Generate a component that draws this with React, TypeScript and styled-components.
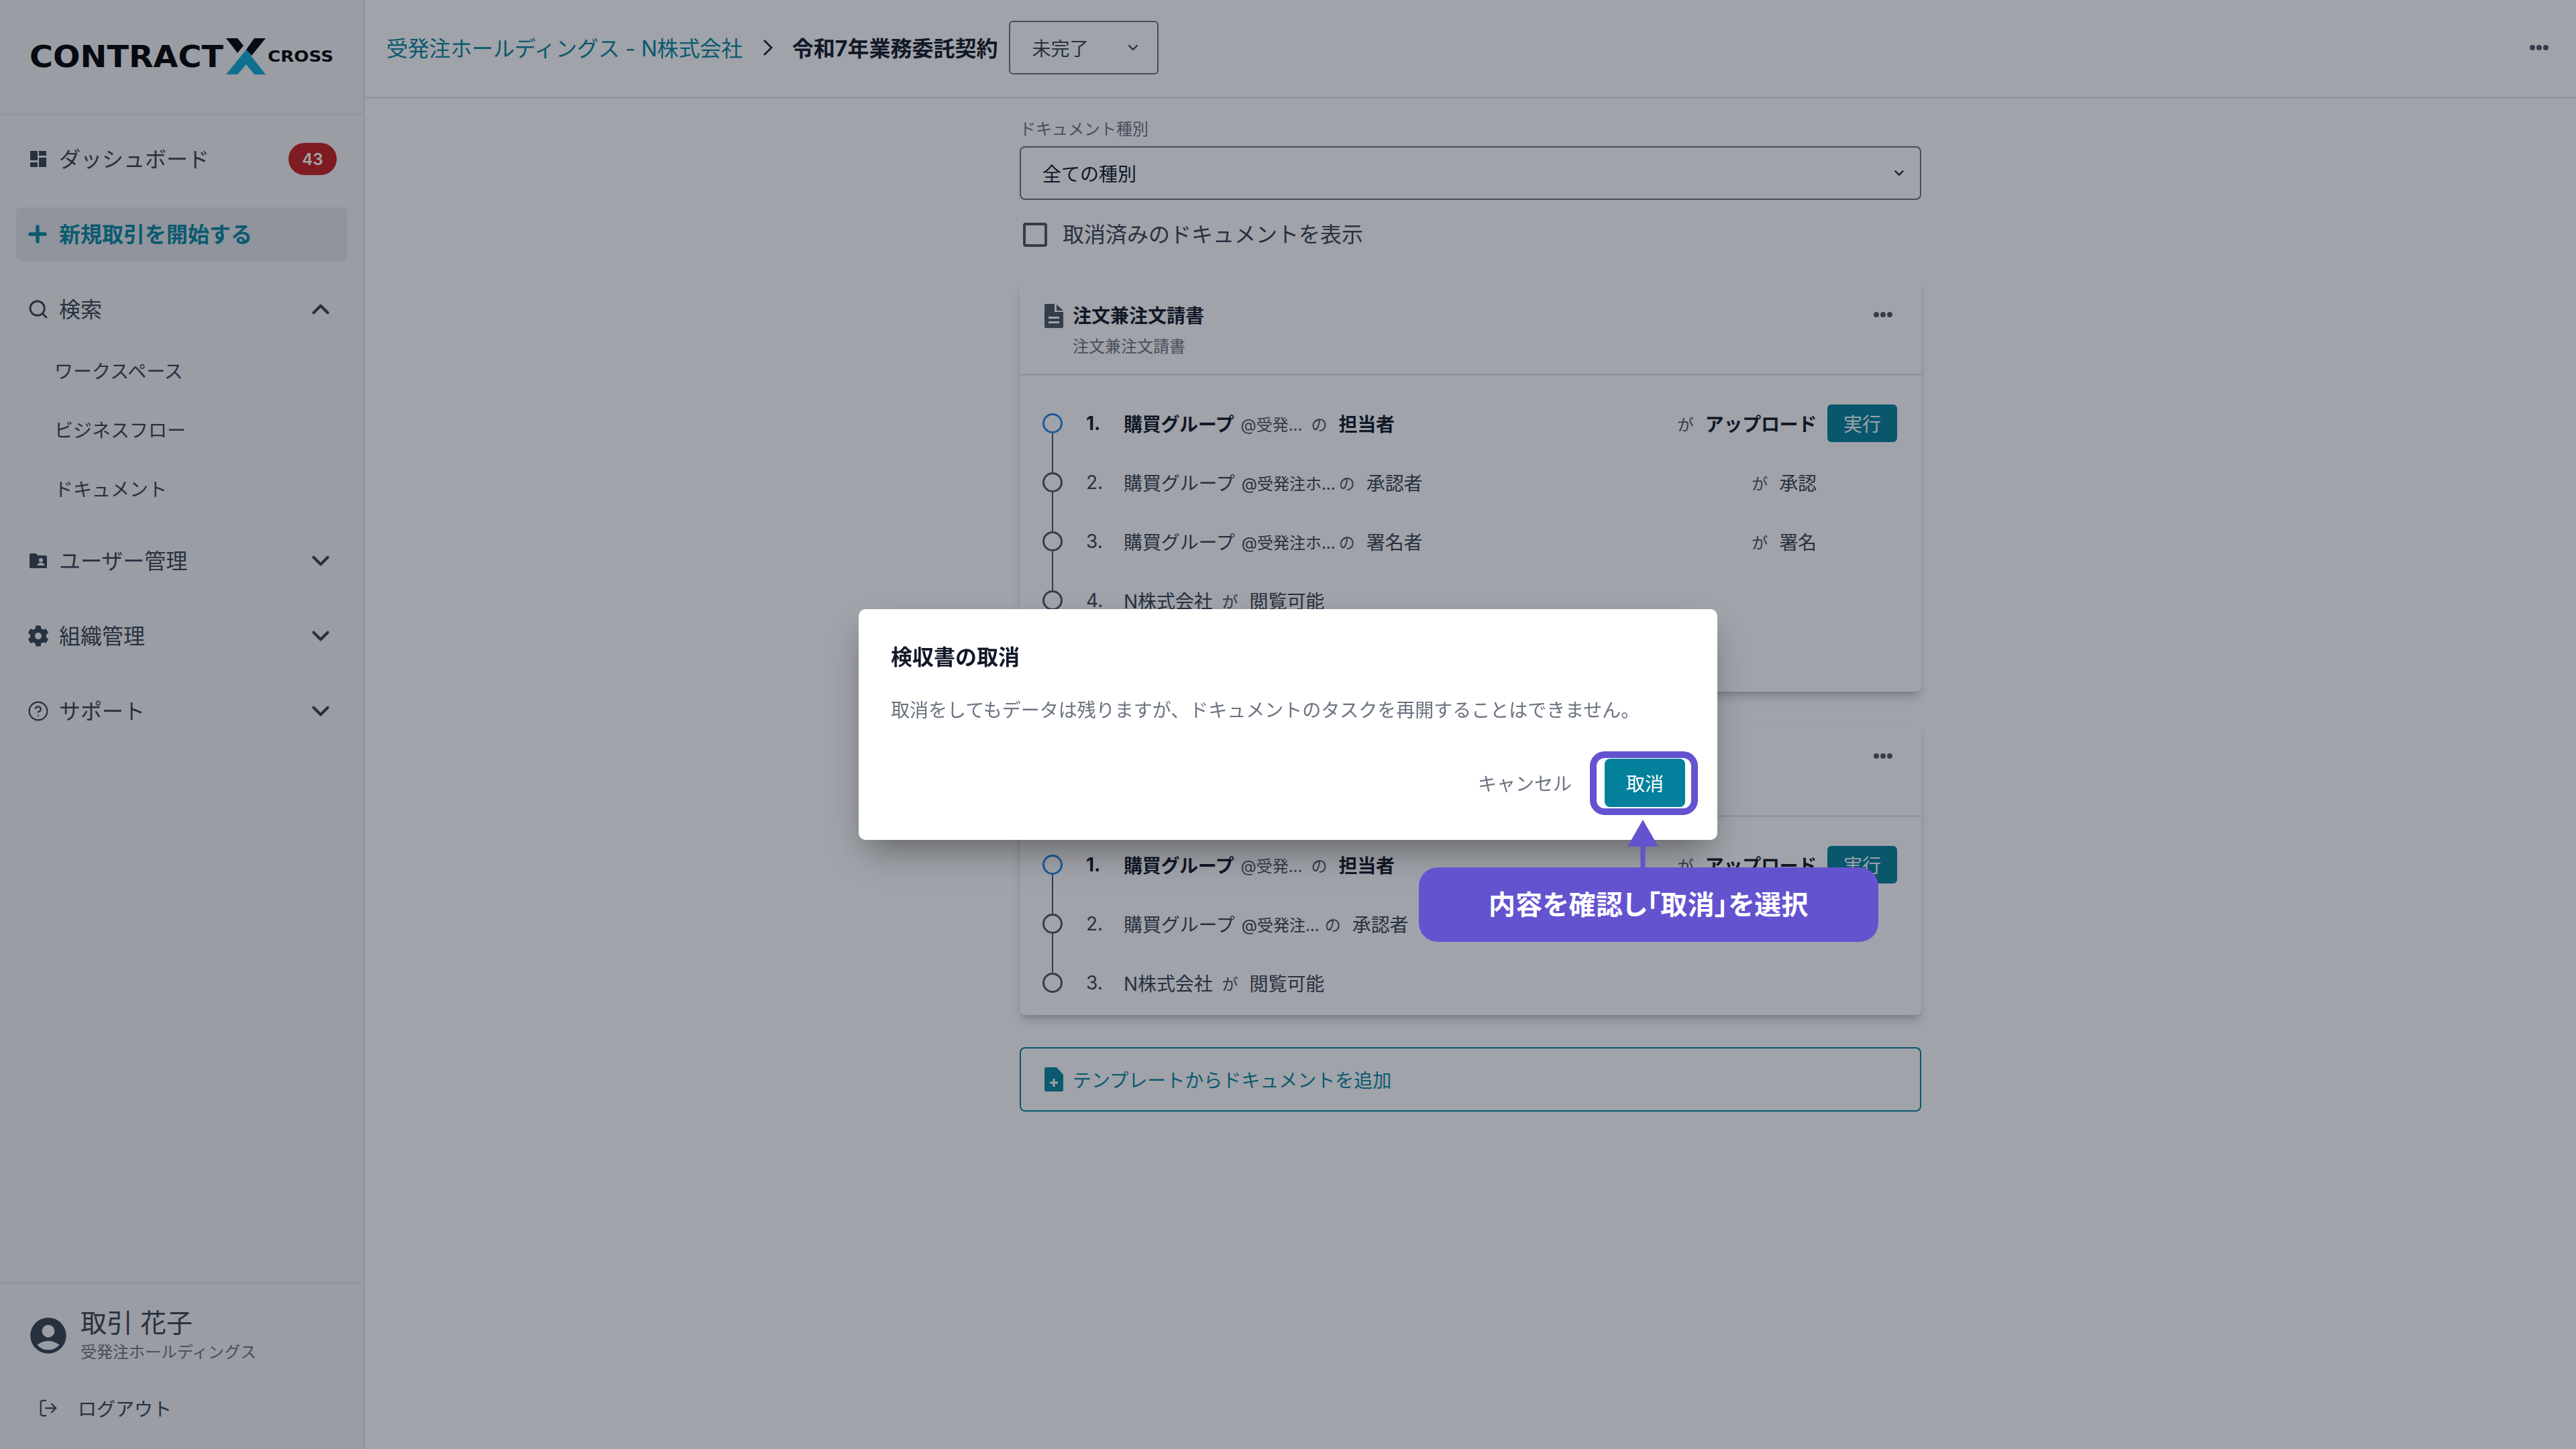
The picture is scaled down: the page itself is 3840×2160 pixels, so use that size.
import * as React from 'react'
import styled, { createGlobalStyle } from 'styled-components'
import { ChevronDown, ChevronUp, CircleHelp, LogOut, Plus, Search } from 'lucide-react'
import { FaCog } from 'react-icons/fa'
import { MdAccountCircle } from 'react-icons/md'

const teal = '#02809c'
const ink = '#111827'
const body = '#374151'
const muted = '#6b7280'
const violet = '#6453cf'

const GlobalStyle = createGlobalStyle`
    html, body {
        margin: 0;
        padding: 0;
        background: #fff;
    }

    body {
        font-family: 'Inter', 'Noto Sans CJK JP', sans-serif;
        color: ${ink};
    }

    * {
        box-sizing: border-box;
    }
`

const Logo = () => (
    <LogoSvg viewBox="0 0 460 60" width="460" height="60">
        <text x="0" y="46" fontFamily="DejaVu Sans" fontWeight="700" fontSize="44" textLength="289" lengthAdjust="spacingAndGlyphs" fill="#000">CONTRACT</text>
        <polygon points="293,3 310,3 319,14 310,25" fill="#000" />
        <polygon points="335,3 352,3 331,29 323,20" fill="#000" />
        <polygon points="323,20 352,57 335,57 323,42 310,57 293,57" fill="#0daad5" />
        <text x="355" y="38" fontFamily="DejaVu Sans" fontWeight="700" fontSize="23" textLength="98" lengthAdjust="spacingAndGlyphs" fill="#000">CROSS</text>
    </LogoSvg>
)

const DashboardIcon = () => (
    <svg viewBox="0 0 24 24" width="24" height="24" fill="currentColor">
        <path d="M0 14h11V0H0zM0 24h11v-7H0zM13 24h11V10H13zM13 0v7h11V0z" />
    </svg>
)

const FolderUserIcon = () => (
    <svg viewBox="0 0 26 22" width="26" height="22">
        <path fill="currentColor" d="M2 0h7.5l3 3H24a2 2 0 0 1 2 2v15a2 2 0 0 1-2 2H2a2 2 0 0 1-2-2V2a2 2 0 0 1 2-2z" />
        <circle cx="17" cy="10" r="3" fill="#f5f6f5" />
        <path fill="#f5f6f5" d="M11.5 18c.3-3 2.6-4.2 5.5-4.2s5.2 1.200 5.500 4.200z" />
    </svg>
)

const DocIcon = () => (
    <svg viewBox="0 0 28 36" width="28" height="36">
        <path fill="currentColor" d="M2 0h13v12h13v22a2 2 0 0 1-2 2H2a2 2 0 0 1-2-2V2a2 2 0 0 1 2-2zM18 1l10 9H18z" />
        <rect x="6" y="19" width="16" height="3" fill="#fff" />
        <rect x="6" y="26" width="16" height="3" fill="#fff" />
    </svg>
)

const DocPlusIcon = () => (
    <svg viewBox="0 0 28 36" width="28" height="36">
        <path fill="currentColor" d="M2 0h16l10 11v23a2 2 0 0 1-2 2H2a2 2 0 0 1-2-2V2a2 2 0 0 1 2-2z" />
        <path stroke="#fff" strokeWidth="3" d="M14 17v12M8 23h12" />
    </svg>
)

const Dots = () => (
    <svg viewBox="0 0 30 10" width="30" height="10" fill="currentColor">
        <circle cx="5" cy="5" r="4" />
        <circle cx="15" cy="5" r="4" />
        <circle cx="25" cy="5" r="4" />
    </svg>
)

interface StepData {
    no: string
    name: string
    handle?: string
    handleWidth?: number
    role: string
    action?: string
    bold?: boolean
    run?: boolean
    joined?: boolean
}

const firstCard: Array<StepData> = [
    { no: '1.', name: '購買グループ', handle: '@受発...', handleWidth: 94, role: '担当者', action: 'アップロード', bold: true, run: true },
    { no: '2.', name: '購買グループ', handle: '@受発注ホ...', handleWidth: 134, role: '承認者', action: '承認' },
    { no: '3.', name: '購買グループ', handle: '@受発注ホ...', handleWidth: 134, role: '署名者', action: '署名' },
    { no: '4.', name: 'N株式会社', role: '閲覧可能', joined: true },
]

// row 2 of the second card has its right part hidden by the callout
const secondCard: Array<StepData> = [
    { no: '1.', name: '購買グループ', handle: '@受発...', handleWidth: 94, role: '担当者', action: 'アップロード', bold: true, run: true },
    { no: '2.', name: '購買グループ', handle: '@受発注...', handleWidth: 113, role: '承認者' },
    { no: '3.', name: 'N株式会社', role: '閲覧可能', joined: true },
]

const Steps = ({ steps, tail }: { steps: Array<StepData>; tail?: boolean }) => (
    <StepList $tail={tail}>
        {steps.map((step, index) => (
            <StepRow key={index} $line={index < steps.length - 1 || tail}>
                <Circle $active={step.bold} />
                <StepNo $bold={step.bold}>{step.no}</StepNo>
                <StepName $bold={step.bold}>{step.name}</StepName>
                {step.handle && <Handle $bold={step.bold} $width={step.handleWidth}>{step.handle}</Handle>}
                {step.joined ? <Particle $wide>が</Particle> : <Particle>の</Particle>}
                <StepName $bold={step.bold}>{step.role}</StepName>
                {step.action && (
                    <StepEnd>
                        <Particle $wide>が</Particle>
                        <StepName $bold={step.bold}>{step.action}</StepName>
                        <RunSlot>{step.run && <RunButton>実行</RunButton>}</RunSlot>
                    </StepEnd>
                )}
            </StepRow>
        ))}
    </StepList>
)

const App = () => (
    <Page>
        <GlobalStyle />
        <Sidebar>
            <div>
                <Brand><Logo /></Brand>
                <Nav>
                    <NavRow>
                        <NavIcon><DashboardIcon /></NavIcon>
                        <NavText>ダッシュボード</NavText>
                        <Badge>43</Badge>
                    </NavRow>
                    <NewDeal>
                        <Plus size={38} strokeWidth={3.4} />
                        <span>新規取引を開始する</span>
                    </NewDeal>
                    <div>
                        <NavRow>
                            <NavIcon><Search size={32} strokeWidth={2.2} /></NavIcon>
                            <NavText>検索</NavText>
                            <NavUp size={42} strokeWidth={2.4} />
                        </NavRow>
                        <SubList>
                            <SubItem>ワークスペース</SubItem>
                            <SubItem>ビジネスフロー</SubItem>
                            <SubItem>ドキュメント</SubItem>
                        </SubList>
                    </div>
                    <NavRow>
                        <NavIcon><FolderUserIcon /></NavIcon>
                        <NavText>ユーザー管理</NavText>
                        <NavDown size={42} strokeWidth={2.4} />
                    </NavRow>
                    <NavRow>
                        <NavIcon><FaCog size={32} /></NavIcon>
                        <NavText>組織管理</NavText>
                        <NavDown size={42} strokeWidth={2.4} />
                    </NavRow>
                    <NavRow>
                        <NavIcon><CircleHelp size={32} strokeWidth={1.7} /></NavIcon>
                        <NavText>サポート</NavText>
                        <NavDown size={42} strokeWidth={2.4} />
                    </NavRow>
                </Nav>
            </div>
            <SideFooter>
                <Profile>
                    <MdAccountCircle size={64} />
                    <div>
                        <ProfileName>取引 花子</ProfileName>
                        <ProfileOrg>受発注ホールディングス</ProfileOrg>
                    </div>
                </Profile>
                <Logout>
                    <LogOut size={30} strokeWidth={1.8} />
                    <span>ログアウト</span>
                </Logout>
            </SideFooter>
        </Sidebar>
        <Main>
            <TopBar>
                <Crumb>受発注ホールディングス - N株式会社</Crumb>
                <ChevronGap>
                    <svg viewBox="0 0 16 28" width="16" height="28" fill="none" stroke={ink} strokeWidth="2.6">
                        <path d="M2 3l11 11L2 25" />
                    </svg>
                </ChevronGap>
                <CrumbCurrent>令和7年業務委託契約</CrumbCurrent>
                <StatusSelect>
                    <span>未完了</span>
                    <ChevronDown size={24} strokeWidth={2.4} />
                </StatusSelect>
                <TopMenu><Dots /></TopMenu>
            </TopBar>
            <Column>
                <FieldLabel>ドキュメント種別</FieldLabel>
                <KindSelect>
                    <span>全ての種別</span>
                    <ChevronDown size={22} strokeWidth={2.6} />
                </KindSelect>
                <CheckRow>
                    <CheckBox />
                    <span>取消済みのドキュメントを表示</span>
                </CheckRow>
                <Card>
                    <CardHeader>
                        <HeaderIcon><DocIcon /></HeaderIcon>
                        <CardTitles>
                            <CardTitle>注文兼注文請書</CardTitle>
                            <CardSub>注文兼注文請書</CardSub>
                        </CardTitles>
                        <CardMenu><Dots /></CardMenu>
                    </CardHeader>
                    <Steps steps={firstCard} tail />
                </Card>
                <Card>
                    <CardHeader>
                        <HeaderIcon><DocIcon /></HeaderIcon>
                        <CardTitles>
                            <CardTitle>検収書</CardTitle>
                            <CardSub>検収書</CardSub>
                        </CardTitles>
                        <CardMenu><Dots /></CardMenu>
                    </CardHeader>
                    <Steps steps={secondCard} />
                </Card>
                <AddTemplate>
                    <DocPlusIcon />
                    <span>テンプレートからドキュメントを追加</span>
                </AddTemplate>
            </Column>
        </Main>
        <Overlay>
            <Dialog>
                <DialogTitle>検収書の取消</DialogTitle>
                <DialogBody>取消をしてもデータは残りますが、ドキュメントのタスクを再開することはできません。</DialogBody>
                <DialogActions>
                    <CancelButton>キャンセル</CancelButton>
                    <ConfirmWrap>
                        <ConfirmButton>取消</ConfirmButton>
                        <Ring />
                    </ConfirmWrap>
                </DialogActions>
                <ArrowMark viewBox="0 0 46 71" width="46" height="71">
                    <path fill={violet} d="M23 0l23 40H26.500v31h-7V40H0z" />
                </ArrowMark>
                <Callout>内容を確認し「取消」を選択</Callout>
            </Dialog>
        </Overlay>
    </Page>
)

export default App

const Page = styled.div`
    display: flex;
    width: 3840px;
    height: 2160px;
    overflow: hidden;
`

const Sidebar = styled.aside`
    flex: 0 0 544px;
    display: flex;
    flex-direction: column;
    justify-content: space-between;
    background: #f5f6f5;
    border-right: 3px solid #e5e7eb;
    color: ${body};
`

const Brand = styled.div`
    height: 172px;
    padding: 54px 0 0 44px;
    border-bottom: 4px solid #e9eaec;
`

const LogoSvg = styled.svg`
    display: block;
`

const Nav = styled.nav`
    display: flex;
    flex-direction: column;
    gap: 32px;
    padding-top: 25px;
`

const NavRow = styled.div`
    display: flex;
    align-items: center;
    height: 80px;
    padding: 0 39px 0 44px;
`

const NavIcon = styled.span`
    display: flex;
    align-items: center;
    justify-content: center;
    width: 26px;
    margin-right: 18px;

    svg {
        flex: none;
    }
`

const NavText = styled.span`
    flex: 1;
    padding-bottom: 4px;
    font-size: 32px;
`

const NavUp = styled(ChevronUp)`
    margin-right: 3px;
`

const NavDown = styled(ChevronDown)`
    margin-right: 3px;
`

const Badge = styled.span`
    display: flex;
    align-items: center;
    justify-content: center;
    width: 72px;
    height: 48px;
    border-radius: 24px;
    background: #c81e1e;
    color: #fff;
    font-size: 24px;
    font-weight: 600;
`

const NewDeal = styled.div`
    display: flex;
    align-items: center;
    gap: 13px;
    height: 80px;
    margin: 0 23px 0 24px;
    padding-left: 13px;
    border-radius: 8px;
    background: #e5e7eb;
    color: #07869f;
    font-size: 32px;
    font-weight: 700;

    span {
        padding-bottom: 4px;
    }
`

const SubList = styled.div`
    margin: 7px 0 -8px;
`

const SubItem = styled.div`
    display: flex;
    align-items: center;
    height: 88px;
    padding-left: 81px;
    font-size: 28px;
`

const SideFooter = styled.div`
    height: 250px;
    padding-top: 36px;
    border-top: 4px solid #e9eaec;
`

const Profile = styled.div`
    display: flex;
    align-items: center;
    gap: 16px;
    padding-left: 40px;
`

const ProfileName = styled.div`
    font-size: 39px;
    line-height: 44px;
`

const ProfileOrg = styled.div`
    margin-top: 6px;
    font-size: 24px;
    line-height: 32px;
    color: ${muted};
`

const Logout = styled.div`
    display: flex;
    align-items: center;
    gap: 29px;
    height: 56px;
    margin-top: 39px;
    padding-left: 57px;
    font-size: 28px;
`

const Main = styled.main`
    flex: 1;
    display: flex;
    flex-direction: column;
`

const TopBar = styled.header`
    display: flex;
    align-items: center;
    height: 147px;
    padding: 0 40px 2px 32px;
    border-bottom: 3px solid #e5e7eb;
`

const Crumb = styled.span`
    padding-bottom: 3px;
    font-size: 32px;
    letter-spacing: -0.2px;
    color: #07869f;
`

const ChevronGap = styled.span`
    display: flex;
    margin: 0 28px 0 30px;
`

const CrumbCurrent = styled.span`
    padding-bottom: 3px;
    font-size: 32px;
    font-weight: 700;
    margin-right: 17px;
`

const StatusSelect = styled.div`
    display: flex;
    align-items: center;
    justify-content: space-between;
    width: 223px;
    height: 80px;
    padding: 0 24px 0 32px;
    border: 2px solid #6b7280;
    border-radius: 6px;
    font-size: 28px;
    color: ${body};
`

const TopMenu = styled.span`
    display: flex;
    margin-left: auto;
    color: #4b5563;
`

const Column = styled.div`
    width: 1344px;
    margin: 0 auto;
    padding-top: 30px;
`

const FieldLabel = styled.div`
    font-size: 24px;
    line-height: 32px;
    color: ${muted};
`

const KindSelect = styled.div`
    display: flex;
    align-items: center;
    justify-content: space-between;
    height: 80px;
    margin-top: 9px;
    padding: 0 20px 0 32px;
    border: 2px solid #6b7280;
    border-radius: 8px;
    font-size: 28px;
`

const CheckRow = styled.div`
    display: flex;
    align-items: center;
    gap: 23px;
    margin-top: 34px;
    padding-left: 5px;
    font-size: 32px;
    line-height: 36px;
    color: ${body};
`

const CheckBox = styled.span`
    width: 36px;
    height: 36px;
    border: 4px solid #4b5563;
    border-radius: 4px;
`

const Card = styled.section`
    margin-top: 53px;
    background: #fff;
    border-radius: 8px;
    box-shadow: 0 10px 15px -3px rgba(0, 0, 0, 0.2), 0 4px 6px -2px rgba(0, 0, 0, 0.1);

    & + & {
        margin-top: 48px;
    }
`

const CardHeader = styled.div`
    display: flex;
    height: 139px;
    padding: 30px 42px 0 37px;
    border-bottom: 3px solid #e5e7eb;
`

const HeaderIcon = styled.span`
    display: flex;
    height: 40px;
    align-items: center;
    margin-right: 14px;
    color: #4b5563;
`

const CardTitles = styled.div`
    flex: 1;
`

const CardTitle = styled.div`
    font-size: 28px;
    line-height: 40px;
    font-weight: 700;
`

const CardSub = styled.div`
    margin-top: 10px;
    font-size: 24px;
    line-height: 32px;
    color: ${muted};
`

const CardMenu = styled.span`
    display: flex;
    align-items: center;
    height: 36px;
    color: #4b5563;
`

const StepList = styled.div<{ $tail?: boolean }>`
    padding: 27px 0 ${(p) => (p.$tail ? 92 : 4)}px;
`

const StepRow = styled.div<{ $line?: boolean }>`
    position: relative;
    display: flex;
    align-items: center;
    height: 88px;
    padding: 0 36px 0 34px;

    &::after {
        content: '';
        display: ${(p) => (p.$line ? 'block' : 'none')};
        position: absolute;
        left: 48px;
        top: 59px;
        width: 2px;
        height: 58px;
        background: #4b5563;
    }
`

const Circle = styled.span<{ $active?: boolean }>`
    flex: none;
    width: 30px;
    height: 30px;
    border-radius: 50%;
    border: 3px solid ${(p) => (p.$active ? '#2a84e0' : '#4b5563')};
`

const StepNo = styled.span<{ $bold?: boolean }>`
    flex: none;
    width: 56px;
    margin-left: 35px;
    font-size: 28px;
    font-weight: ${(p) => (p.$bold ? 700 : 400)};
    color: ${(p) => (p.$bold ? ink : body)};
`

const StepName = styled.span<{ $bold?: boolean }>`
    font-size: 28px;
    letter-spacing: ${(p) => (p.$bold ? -0.3 : -0.1)}px;
    font-weight: ${(p) => (p.$bold ? 700 : 400)};
    color: ${(p) => (p.$bold ? ink : body)};
`

const Handle = styled.span<{ $bold?: boolean; $width?: number }>`
    flex: none;
    width: ${(p) => p.$width}px;
    margin-left: 10px;
    font-size: 24px;
    white-space: nowrap;
    color: ${(p) => (p.$bold ? '#4b5563' : body)};
`

const Particle = styled.span<{ $wide?: boolean }>`
    margin: 0 17px 0 ${(p) => (p.$wide ? 14 : 11)}px;
    font-size: 24px;
    color: #4b5563;
`

const StepEnd = styled.div`
    display: flex;
    align-items: center;
    margin-left: auto;
`

const RunSlot = styled.span`
    display: flex;
    justify-content: flex-end;
    width: 120px;
`

const RunButton = styled.span`
    display: flex;
    align-items: center;
    justify-content: center;
    width: 104px;
    height: 56px;
    border-radius: 6px;
    background: ${teal};
    color: #fff;
    font-size: 28px;
`

const AddTemplate = styled.div`
    display: flex;
    align-items: center;
    gap: 14px;
    height: 96px;
    margin-top: 48px;
    padding-left: 35px;
    border: 2px solid ${teal};
    border-radius: 8px;
    color: #07869f;
    font-size: 28px;
`

const Overlay = styled.div`
    position: fixed;
    inset: 0;
    display: flex;
    align-items: center;
    justify-content: center;
    background: rgba(17, 24, 39, 0.4);
`

const Dialog = styled.div`
    position: relative;
    width: 1280px;
    height: 344px;
    padding: 52px 48px 0;
    border-radius: 10px;
    background: #fff;
    box-shadow: 0 25px 50px -12px rgba(0, 0, 0, 0.4);
`

const DialogTitle = styled.h2`
    margin: 0;
    font-size: 32px;
    line-height: 40px;
    font-weight: 700;
`

const DialogBody = styled.p`
    margin: 39px 0 0;
    font-size: 28px;
    line-height: 40px;
    color: ${muted};
`

const DialogActions = styled.div`
    display: flex;
    align-items: center;
    justify-content: flex-end;
    margin-top: 52px;
`

const CancelButton = styled.span`
    margin-right: 49px;
    font-size: 28px;
    color: ${muted};
`

const ConfirmWrap = styled.div`
    position: relative;
`

const ConfirmButton = styled.span`
    display: flex;
    align-items: center;
    justify-content: center;
    width: 120px;
    height: 72px;
    border-radius: 8px;
    background: ${teal};
    color: #fff;
    font-size: 28px;
`

const Ring = styled.span`
    position: absolute;
    left: -22px;
    top: -11px;
    width: 161px;
    height: 95px;
    border: 10px solid ${violet};
    border-radius: 22px;
`

const ArrowMark = styled.svg`
    position: absolute;
    left: 1146px;
    top: 314px;
`

const Callout = styled.div`
    position: absolute;
    left: 835px;
    top: 385px;
    display: flex;
    align-items: center;
    justify-content: center;
    width: 685px;
    height: 111px;
    padding-bottom: 6px;
    border-radius: 28px;
    background: ${violet};
    color: #fff;
    font-size: 40px;
    letter-spacing: 0.4px;
    font-weight: 700;
    font-feature-settings: 'palt';
`
